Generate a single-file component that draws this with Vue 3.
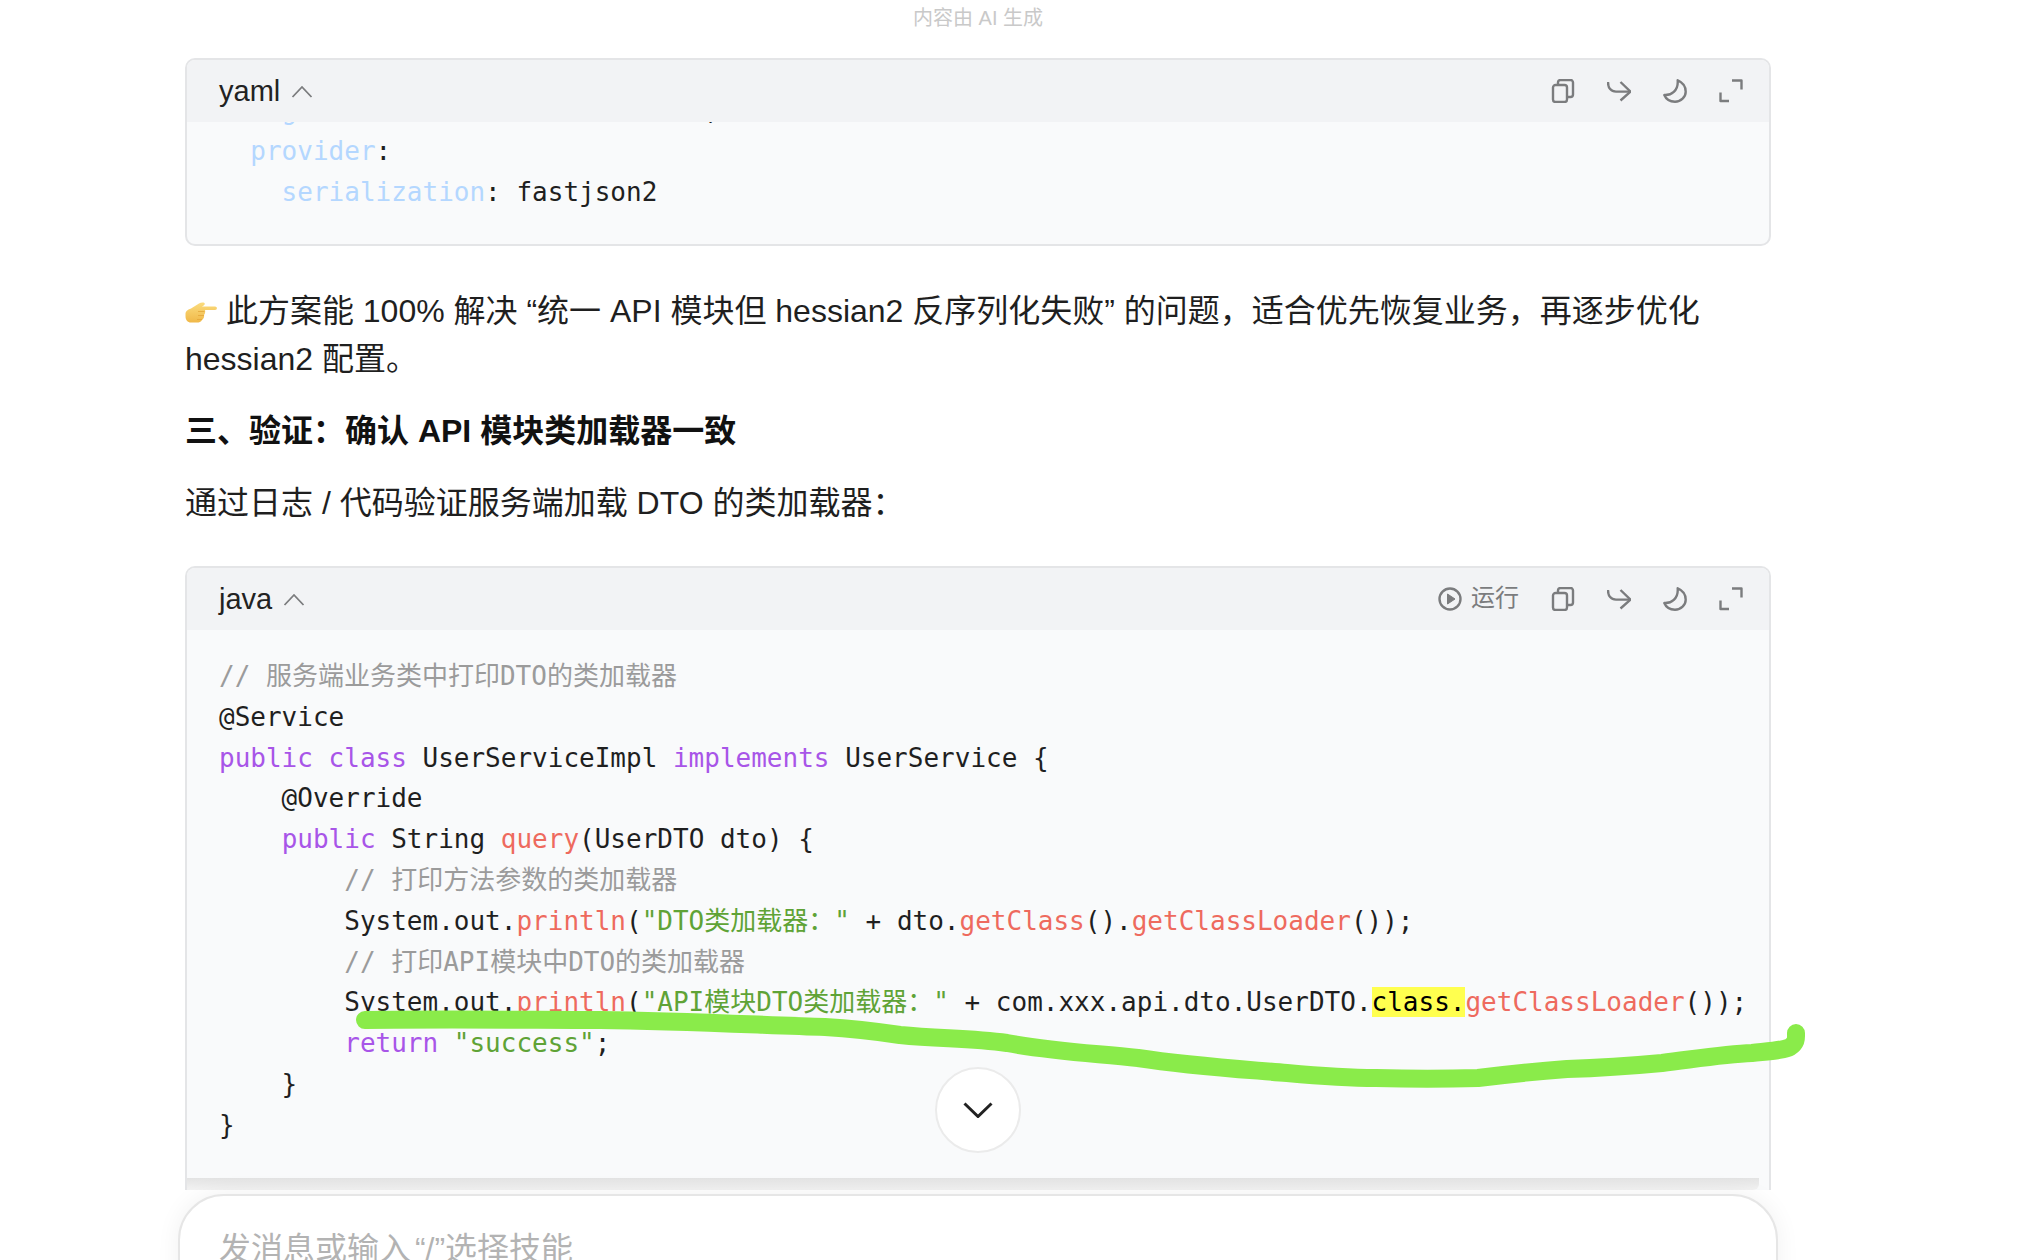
<script setup>
const icons = [
  ['M7 6V3.200A2.500 2.500 0 0 1 9.500 1h10A2.500 2.500 0 0 1 22 3.500v12a2.500 2.500 0 0 1-2.500 2.500H16', 'M4.500 6h9A2.500 2.500 0 0 1 16 8.500v12a2.500 2.500 0 0 1-2.500 2.500h-9A2.500 2.500 0 0 1 2 20.500v-12A2.500 2.500 0 0 1 4.500 6z'],
  ['M1 3c0 6 3 9.600 8 9.600h14.500', 'M13.500 3l10 9.600-10 8.900'],
  ['M14.700 1.300C20 3.500 22.700 8 22.700 12.700C22.700 18 18 22.700 12 22.700C7 22.700 3 20 1.300 16C8 16.500 15.500 12 14.700 1.300z'],
  ['M13 1.500h9.500v9', 'M1.500 13.500V22H10']
]

const t = (s, c = '') => [s, c]
const yamlLines = [
  [t('  log', 'key'), t(': nacos://127.0.0.1:8848/x,')],
  [t('  provider', 'key'), t(':')],
  [t('    serialization', 'key'), t(': fastjson2')]
]
const javaLines = [
  [t('// 服务端业务类中打印DTO的类加载器', 'com')],
  [t('@Service')],
  [t('public class', 'kw'), t(' UserServiceImpl '), t('implements', 'kw'), t(' UserService {')],
  [t('    @Override')],
  [t('    '), t('public', 'kw'), t(' String '), t('query', 'fn'), t('(UserDTO dto) {')],
  [t('        // 打印方法参数的类加载器', 'com')],
  [t('        System.out.'), t('println', 'fn'), t('('), t('"DTO类加载器："', 'str'), t(' + dto.'), t('getClass', 'fn'), t('().'), t('getClassLoader', 'fn'), t('());')],
  [t('        // 打印API模块中DTO的类加载器', 'com')],
  [t('        System.out.'), t('println', 'fn'), t('('), t('"API模块DTO类加载器："', 'str'), t(' + com.xxx.api.dto.UserDTO.'), t('class.', 'hl'), t('getClassLoader', 'fn'), t('());')],
  [t('        '), t('return', 'kw'), t(' '), t('"success"', 'str'), t(';')],
  [t('    }')],
  [t('}')]
]
</script>

<template>
  <div class="page">
    <main class="content">
      <div class="notice">内容由 AI 生成</div>

      <section class="card">
        <header class="head">
          <span class="lang">yaml</span>
          <svg class="chev" viewBox="0 0 22 13"><path d="M1.500 12 11 2l9.500 10" /></svg>
          <div class="tools">
            <svg v-for="(ic, i) in icons" :key="i" class="tool" viewBox="0 0 24 24"><path v-for="d in ic" :key="d" :d="d" /></svg>
          </div>
        </header>
        <div class="code yaml">
          <pre class="inner clipped"><div v-for="(l, i) in yamlLines" :key="i" class="line"><span v-for="(s, j) in l" :key="j" :class="s[1]">{{ s[0] }}</span></div></pre>
        </div>
      </section>

      <p class="para first">
        <svg class="hand" viewBox="0 0 32 22">
          <defs>
            <linearGradient id="handFill" x1="0" y1="0" x2="0" y2="1">
              <stop offset="0" stop-color="#fbdc7e" />
              <stop offset="1" stop-color="#f0b848" />
            </linearGradient>
          </defs>
          <path fill="url(#handFill)" d="M.5 13C.5 10 3 8.500 6 7.500L14 2.500C16 1 20 1 19.800 3C19.700 4 18 5 17 5.500H30C32.500 5.500 32.500 9 30 9H20C20.500 11 20 13 19 14C19.500 16 18.500 18 17 19C16 21 14 21.500 12 21.500H6C2.500 21.500 .5 19 .5 15z" />
          <path fill="none" stroke="#e3a63a" stroke-width=".8" d="M13 10.500h6.500M13 14.500h6M12 18.500h5" />
        </svg>
        此方案能 100% 解决 “统一 API 模块但 hessian2 反序列化失败” 的问题，适合优先恢复业务，再逐步优化 hessian2 配置。
      </p>
      <h3 class="title">三、验证：确认 API 模块类加载器一致</h3>
      <p class="para">通过日志 / 代码验证服务端加载 DTO 的类加载器：</p>

      <section class="card java">
        <header class="head">
          <span class="lang">java</span>
          <svg class="chev" viewBox="0 0 22 13"><path d="M1.500 12 11 2l9.500 10" /></svg>
          <div class="tools">
            <span class="run">
              <svg class="tool" viewBox="0 0 24 24"><circle cx="12" cy="12" r="10.500" /><path class="solid" d="M9.500 7v10l7.500-5z" /></svg>
              <span class="run-label">运行</span>
            </span>
            <svg v-for="(ic, i) in icons" :key="i" class="tool" viewBox="0 0 24 24"><path v-for="d in ic" :key="d" :d="d" /></svg>
          </div>
        </header>
        <div class="code">
          <pre class="inner"><div v-for="(l, i) in javaLines" :key="i" class="line"><span v-for="(s, j) in l" :key="j" :class="s[1]">{{ s[0] }}</span></div></pre>
        </div>
        <div class="scrollbar"></div>
      </section>
    </main>

    <svg class="scribble" viewBox="0 0 2034 1260">
      <path d="M365 1020C450 1019 540 1020 600 1020C680 1021 760 1025 825 1027C860 1029 880 1032 900 1035C940 1039 970 1038 1007 1043C1050 1051 1090 1053 1138 1058C1190 1066 1240 1069 1287 1073C1320 1076 1345 1078 1376 1078C1410 1079 1445 1079 1478 1078C1510 1074 1540 1071 1567 1069C1600 1068 1630 1066 1662 1063C1695 1059 1725 1054 1752 1053C1770 1051 1785 1050 1790 1047C1797 1042 1796 1038 1796 1033" />
    </svg>

    <button class="down" type="button">
      <svg viewBox="0 0 30 16"><path d="M1.500 1.500 15 14.500 28.500 1.500" /></svg>
    </button>

    <div class="composer">发消息或输入 “/”选择技能</div>
  </div>
</template>

<style scoped>
.page {
  position: relative;
  width: 2034px;
  height: 1260px;
  overflow: hidden;
  background: #fff;
  font-family: "Liberation Sans", "Noto Sans CJK SC", sans-serif;
  color: #1f1f1f;
}
.content {
  width: 1586px;
  margin-left: 185px;
}
.notice {
  height: 58px;
  padding-top: 5px;
  box-sizing: border-box;
  line-height: 27px;
  font-size: 20px;
  text-align: center;
  color: #c9c9c9;
}
.card {
  border: 2px solid #e4e5e7;
  border-radius: 10px;
  overflow: hidden;
  background: #f9fafb;
}
.head {
  display: flex;
  align-items: center;
  height: 62px;
  padding: 0 26px 0 32px;
  background: #f2f3f5;
}
.lang {
  font-size: 29px;
  color: #222;
  margin-right: 11px;
}
.chev {
  width: 22px;
  height: 13px;
}
.chev path,
.tool path,
.tool circle {
  fill: none;
  stroke: #7b7c7e;
}
.chev path { stroke-width: 1.8; }
.tool path,
.tool circle {
  stroke-width: 2.400;
  stroke-linejoin: round;
}
.tool path.solid {
  fill: #7b7c7e;
  stroke-width: 1;
}
.tools {
  display: flex;
  align-items: center;
  gap: 32px;
  margin-left: auto;
}
.tool {
  width: 24px;
  height: 24px;
}
.run {
  display: flex;
  align-items: center;
  gap: 9px;
  font-size: 24px;
  color: #7b7c7e;
}
.run-label {
  line-height: 24px;
  margin-top: -2px;
}
.code {
  overflow: hidden;
}
.yaml {
  height: 122px;
}
.inner {
  margin: 0;
  padding: 26px 32px 32px;
  font-family: "DejaVu Sans Mono", "Noto Sans CJK SC", monospace;
  font-size: 26px;
  line-height: 40.8px;
  color: #1f1f1f;
}
.clipped {
  padding-top: 0;
  margin-top: -32px;
}
.line { height: 40.8px; white-space: pre; }
.key { color: #b4d7ff; }
.com { color: #9b9b9b; }
.kw { color: #a855e8; }
.fn { color: #ee6a5e; }
.str { color: #5fa336; }
.hl { background: #ffff4f; color: #000; }
.para {
  margin: 0;
  font-size: 32px;
  line-height: 48px;
  color: #1f1f1f;
}
.first {
  margin-top: 41px;
}
.hand {
  width: 32px;
  height: 22px;
  vertical-align: -1px;
}
.title {
  margin: 24px 0;
  font-size: 32px;
  line-height: 48px;
  font-weight: 700;
  color: #111;
}
.java {
  margin-top: 39px;
  border-bottom: none;
  border-radius: 10px 10px 0 0;
}
.scrollbar {
  height: 12px;
  margin-right: 10px;
  border-radius: 0 0 6px 0;
  background: linear-gradient(#e3e3e3, #f3f3f3);
}
.scribble {
  position: absolute;
  left: 0;
  top: 0;
  width: 2034px;
  height: 1260px;
  pointer-events: none;
}
.scribble path {
  fill: none;
  stroke: #8aeb4a;
  stroke-width: 18;
  stroke-linecap: round;
  stroke-linejoin: round;
}
.down {
  position: absolute;
  left: 935px;
  top: 1067px;
  width: 86px;
  height: 86px;
  padding: 0;
  display: flex;
  align-items: center;
  justify-content: center;
  border: 2px solid #ebebeb;
  border-radius: 50%;
  background: #fff;
}
.down svg {
  width: 30px;
  height: 16px;
}
.down path {
  fill: none;
  stroke: #222;
  stroke-width: 3;
}
.composer {
  position: absolute;
  left: 178px;
  top: 1194px;
  width: 1600px;
  height: 120px;
  box-sizing: border-box;
  padding: 31px 39px;
  border: 2px solid #e6e6e6;
  border-radius: 46px;
  background: #fff;
  box-shadow: 0 0 24px rgba(0, 0, 0, 0.06);
  font-size: 32px;
  line-height: 44px;
  word-spacing: -5px;
  color: #b3b3b3;
}
</style>
